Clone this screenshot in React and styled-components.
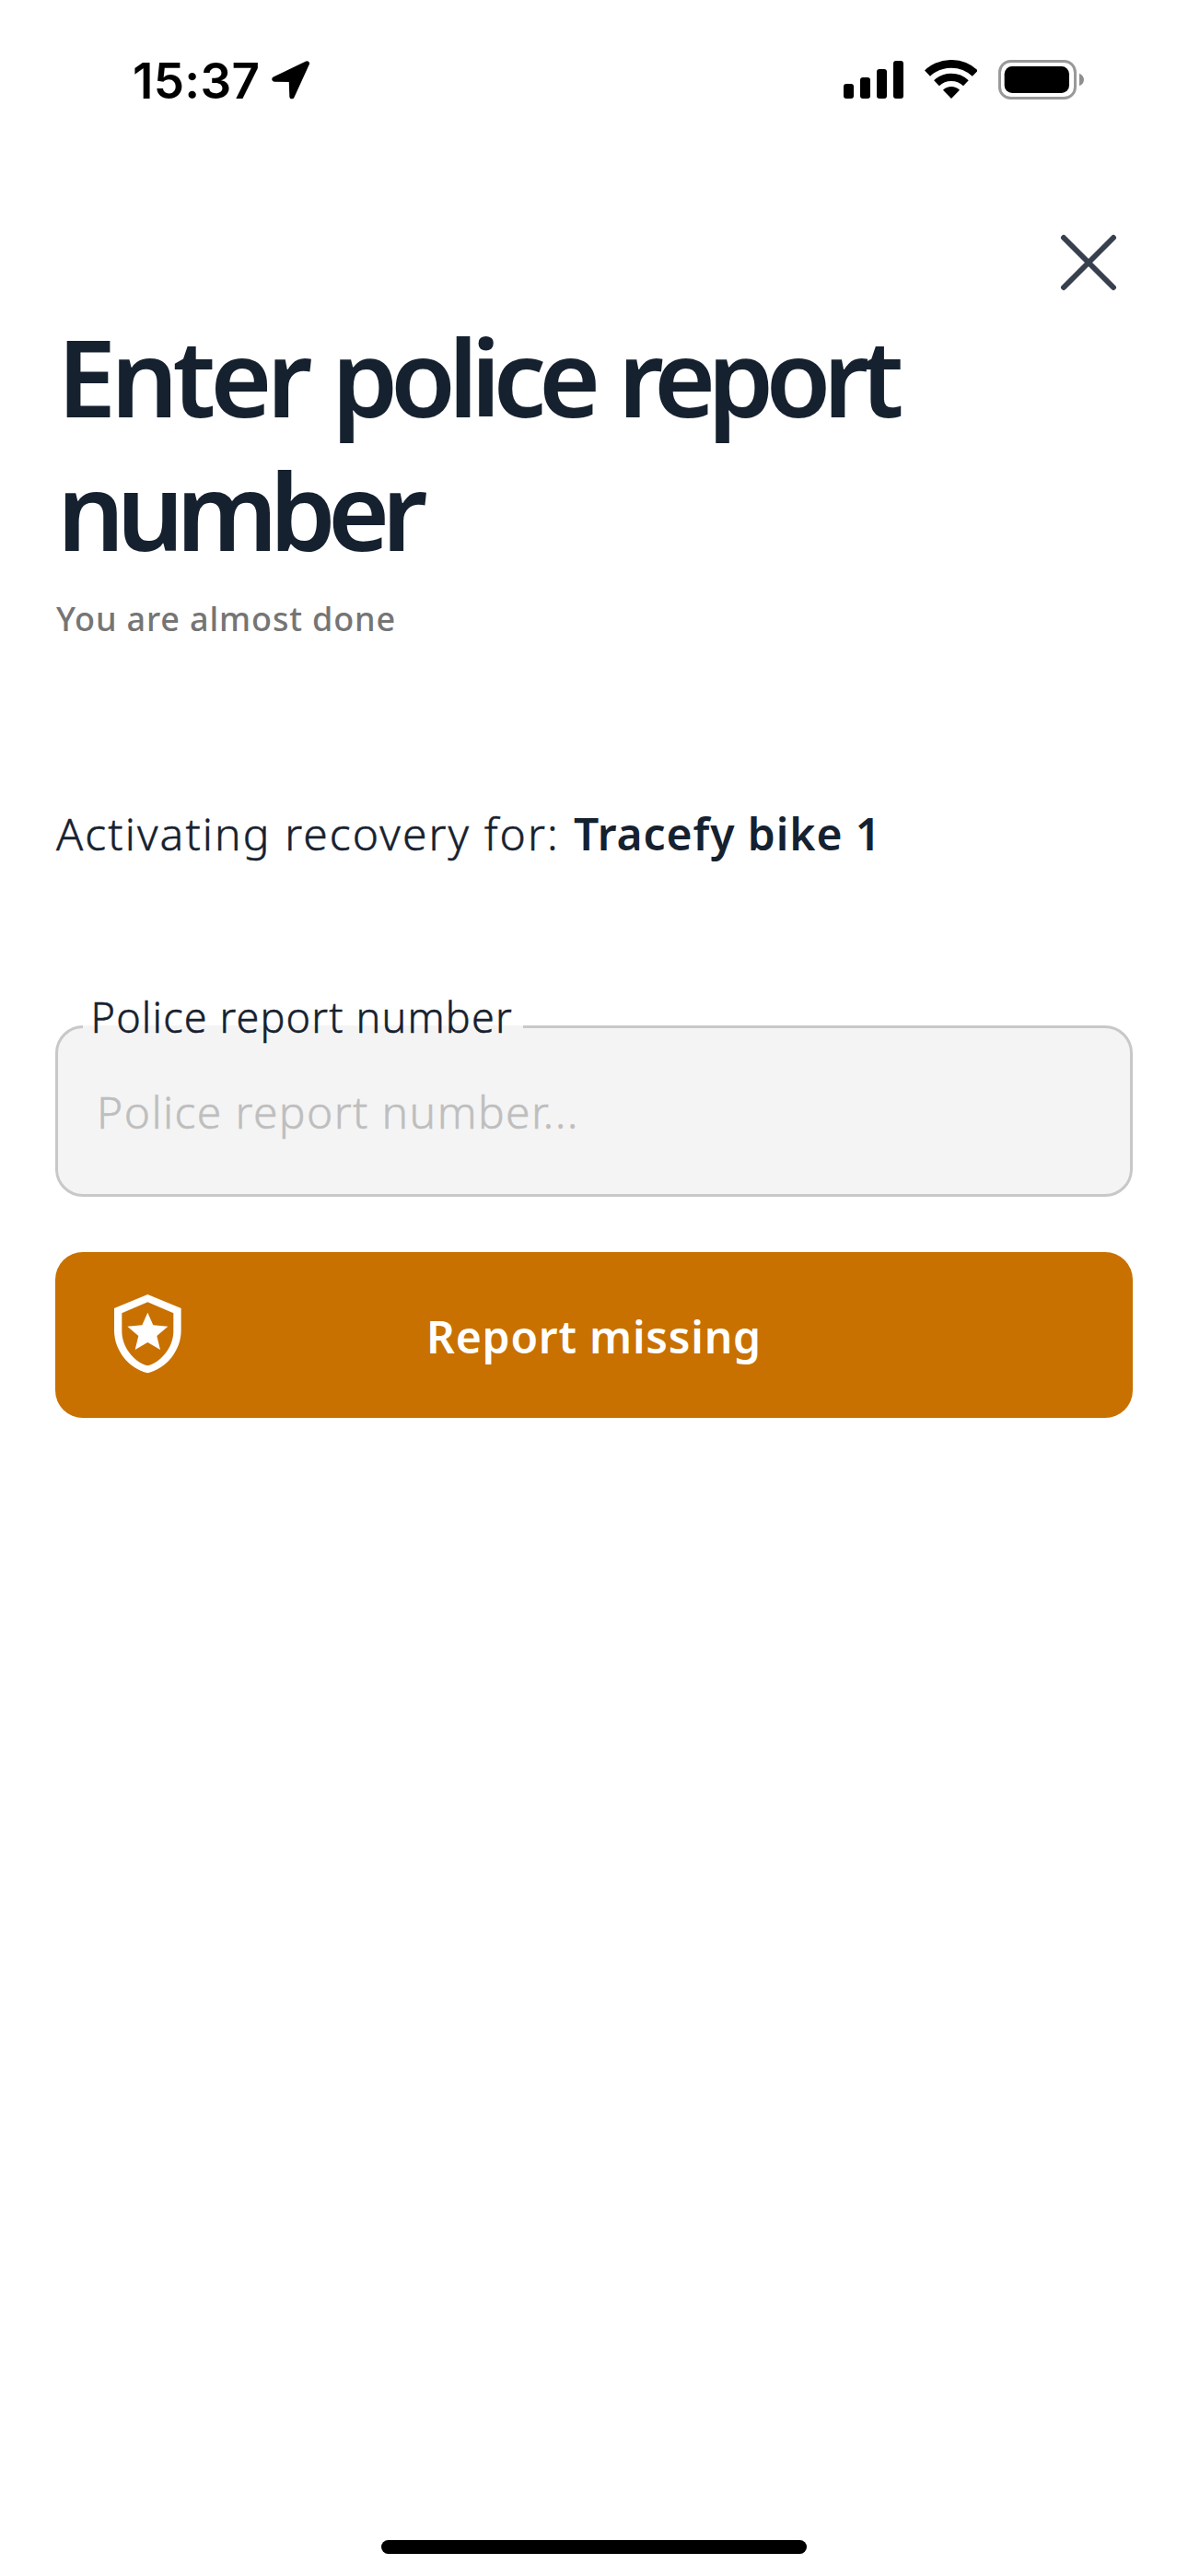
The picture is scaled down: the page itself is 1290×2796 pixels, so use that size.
import React from "react";
import styled, { createGlobalStyle } from "styled-components";

const ink = "#16212f";
const sans = '"Noto Sans", sans-serif';

const GlobalStyle = createGlobalStyle`
  * { box-sizing: border-box; }
  body { margin: 0; background: #fff; }
`;

const Screen = styled.div`
  display: flex;
  flex-direction: column;
  width: 1290px;
  height: 2796px;
  background: #fff;
  color: ${ink};
  font-family: ${sans};
`;

const StatusBar = styled.div`
  display: flex;
  align-items: center;
  justify-content: space-between;
  height: 173px;
  flex: none;
  padding: 0 112.67px 0 144px;
`;

const StatusGroup = styled.div`
  display: flex;
  align-items: center;
  gap: ${(p) => p.$gap}px;
`;

const Time = styled.span`
  width: 147px;
  margin-top: 3px;
  font: 600 53px/60px Inter, sans-serif;
  letter-spacing: 0.3px;
  color: #000;
`;

const Glyph = styled.svg`
  display: block;
  width: ${(p) => p.$w}px;
  height: ${(p) => p.$h}px;
  fill: currentColor;
  color: ${(p) => p.$color || "#000"};
`;

const CloseRow = styled.div`
  display: flex;
  justify-content: flex-end;
  align-items: flex-start;
  height: 163px;
  flex: none;
  padding: 76px 72px 0 0;
`;

const IconButton = styled.button`
  display: flex;
  padding: 0;
  border: 0;
  background: none;
`;

const Content = styled.main`
  display: flex;
  flex-direction: column;
  flex: 1;
  padding: 0 60px;
`;

const Title = styled.h1`
  margin: 0 0 19px 2px;
  font-size: 115px;
  font-weight: 600;
  line-height: 145px;
  letter-spacing: -7px;
  word-spacing: 4px;
`;

const Word = styled.span`
  letter-spacing: ${(p) => p.$track}px;
`;

const Subtitle = styled.p`
  margin: 0 0 174px 1px;
  font-size: 36px;
  font-weight: 500;
  line-height: 54px;
  letter-spacing: 0.85px;
  color: #757575;
`;

const Recovery = styled.p`
  display: flex;
  margin: 0 0 176px 1px;
  font-size: 48px;
  font-weight: 300;
  line-height: 64px;
`;

const RecoveryLabel = styled.span`
  width: 562px;
  letter-spacing: 2.1px;
  -webkit-text-stroke: 0.5px currentColor;
`;

const BikeName = styled.strong`
  font-weight: 650;
  letter-spacing: 0.9px;
`;

const Field = styled.div`
  position: relative;
  height: 186px;
  margin-bottom: 60px;
`;

const FieldLabel = styled.label`
  position: absolute;
  top: -39px;
  left: 30px;
  width: 478px;
  padding-left: 8.5px;
  font-size: 45px;
  font-weight: 300;
  line-height: 60px;
  letter-spacing: 1.15px;
  white-space: nowrap;
  -webkit-text-stroke: 0.5px currentColor;
  background: linear-gradient(transparent 39px, #f4f4f4 39px);
`;

const Input = styled.input`
  display: block;
  width: 100%;
  height: 100%;
  padding: 0 42px;
  border: 3px solid #c8c8c8;
  border-radius: 30px;
  outline: 0;
  background: #f4f4f4;
  color: ${ink};
  font: 300 48px/64px ${sans};
  letter-spacing: 1.4px;
  &::placeholder {
    color: #bebebe;
    opacity: 1;
    -webkit-text-stroke: 0.5px #bebebe;
  }
`;

const PrimaryButton = styled.button`
  display: grid;
  grid-template-columns: 1fr auto 1fr;
  align-items: center;
  height: 180px;
  padding: 0 64px 2px;
  border: 0;
  border-radius: 30px;
  background: #c87100;
  color: #fff;
  font: 600 48px/64px ${sans};
  letter-spacing: 0.8px;
`;

const ButtonLabel = styled.span`
  padding-top: 5px;
`;

const HomeIndicator = styled.div`
  align-self: center;
  width: 462px;
  height: 15px;
  margin-bottom: 24px;
  border-radius: 8px;
  background: #000;
`;

const LocationArrow = () => (
  <Glyph viewBox="523 82 126 126" $w={42} $h={42}>
    <path d="M638 91 532 142 587 143 589 198Z" stroke="currentColor" strokeWidth="16" strokeLinejoin="round" />
  </Glyph>
);

const Signal = () => (
  <Glyph viewBox="78 75 195 129" $w={65} $h={43}>
    <rect x="78" y="153" width="33" height="48" rx="9" />
    <rect x="132" y="132" width="33" height="69" rx="9" />
    <rect x="186" y="105" width="33" height="96" rx="9" />
    <rect x="240" y="78" width="33" height="123" rx="9" />
  </Glyph>
);

const Wifi = () => (
  <Glyph viewBox="341 75 173 129" $w={57.67} $h={43}>
    <g fill="none" stroke="currentColor">
      <path d="M350 119A113 113 0 0 1 505.600 119" strokeWidth="26" />
      <path d="M380 150.600A69.500 69.500 0 0 1 475.600 150.600" strokeWidth="25" />
    </g>
    <path d="M428 201 401 173A39 39 0 0 1 455 173Z" />
  </Glyph>
);

const Battery = () => (
  <Glyph viewBox="582 75 280 129" $w={93.33} $h={43}>
    <rect x="586.500" y="79.500" width="246" height="120" rx="36" fill="none" stroke="#999" strokeWidth="9" />
    <rect x="602" y="96" width="211" height="87" rx="25" />
    <path d="M846 119C866 127 866 152 846 160Z" fill="#8e8e8e" />
  </Glyph>
);

const Close = () => (
  <Glyph viewBox="0 0 72 72" $w={72} $h={72} $color="#38404f">
    <path d="M9 9 63 63M63 9 9 63" stroke="currentColor" strokeWidth="6" strokeLinecap="round" />
  </Glyph>
);

const ShieldStar = () => (
  <Glyph viewBox="252 195 218 260" $w={72.67} $h={86.67} $color="#fff">
    <path
      fillRule="evenodd"
      d="M361 195 470 240V312C470 377 423 436 361 451 299 436 252 377 252 312V240ZM361 220 277 256V314C277 364 313 413 361 427 409 413 445 364 445 314V256Z"
    />
    <path d="M361 254 379 295 427 299 391 330 402 375 361 351 320 375 331 330 295 299 343 295Z" />
  </Glyph>
);

export default function App() {
  return (
    <Screen>
      <GlobalStyle />
      <StatusBar>
        <StatusGroup $gap={3.5}>
          <Time>15:37</Time>
          <LocationArrow />
        </StatusGroup>
        <StatusGroup $gap={22.67}>
          <Signal />
          <Wifi />
          <Battery />
        </StatusGroup>
      </StatusBar>
      <CloseRow>
        <IconButton aria-label="Close">
          <Close />
        </IconButton>
      </CloseRow>
      <Content>
        <Title>
          <Word $track={-6}>Enter</Word> <Word $track={-8.2}>police</Word>{" "}
          <Word $track={-8.8}>report</Word> <Word $track={-8.8}>number</Word>
        </Title>
        <Subtitle>You are almost done</Subtitle>
        <Recovery>
          <RecoveryLabel>Activating recovery for:</RecoveryLabel>
          <BikeName>Tracefy bike 1</BikeName>
        </Recovery>
        <Field>
          <FieldLabel htmlFor="report-number">Police report number</FieldLabel>
          <Input id="report-number" placeholder="Police report number..." />
        </Field>
        <PrimaryButton>
          <ShieldStar />
          <ButtonLabel>Report missing</ButtonLabel>
        </PrimaryButton>
      </Content>
      <HomeIndicator />
    </Screen>
  );
}
